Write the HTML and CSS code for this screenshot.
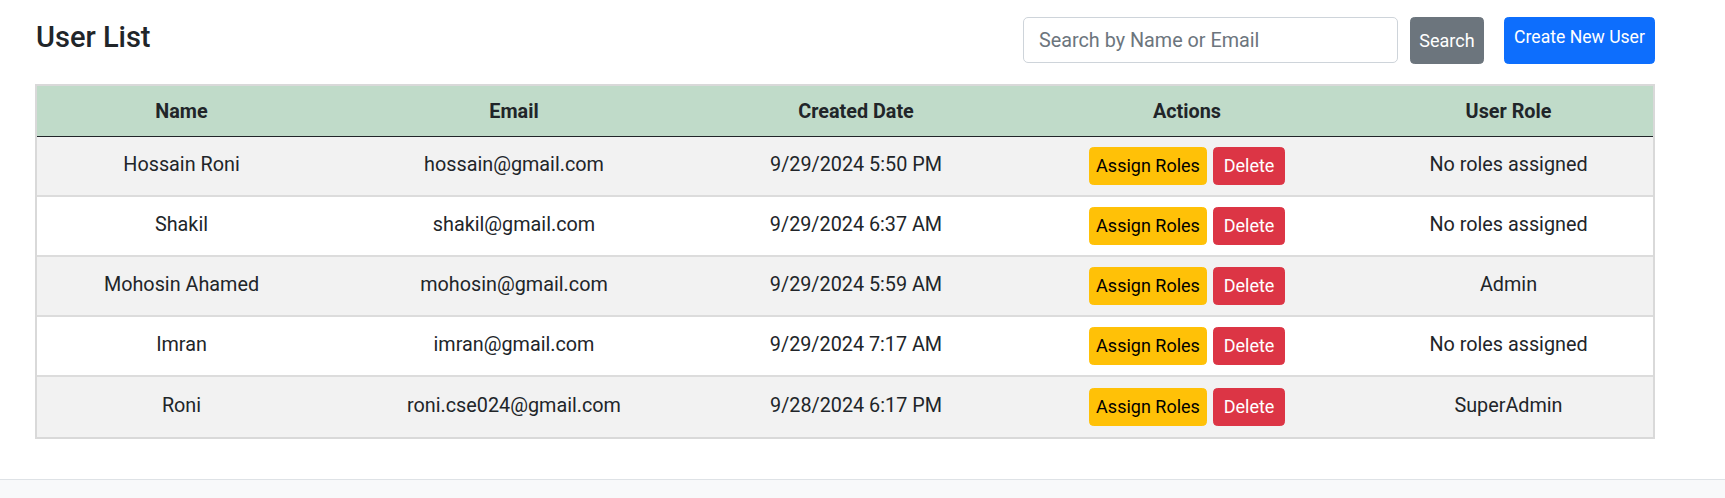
FILE: index.html
```html
<!DOCTYPE html>
<html lang="en">
<head>
<meta charset="utf-8">
<title>User List</title>
<link rel="stylesheet" href="styles.css">
</head>
<body>
<main class="page">
  <div class="topbar">
    <h3 class="title">User List</h3>
    <div class="tools">
      <form class="search">
        <input class="search-input" type="text" placeholder="Search by Name or Email">
        <button type="button" class="btn btn-secondary">Search</button>
      </form>
      <a class="btn btn-primary btn-create">Create New User</a>
    </div>
  </div>
  <div class="table-wrap">
    <table class="users">
      <thead>
        <tr>
          <th class="c-name">Name</th>
          <th class="c-email">Email</th>
          <th class="c-date">Created Date</th>
          <th class="c-actions">Actions</th>
          <th class="c-role">User Role</th>
        </tr>
      </thead>
      <tbody>
        <tr>
          <td>Hossain Roni</td>
          <td>hossain@gmail.com</td>
          <td>9/29/2024 5:50 PM</td>
          <td><div class="actions"><button class="btn btn-warning">Assign Roles</button><button class="btn btn-danger">Delete</button></div></td>
          <td>No roles assigned</td>
        </tr>
        <tr>
          <td>Shakil</td>
          <td>shakil@gmail.com</td>
          <td>9/29/2024 6:37 AM</td>
          <td><div class="actions"><button class="btn btn-warning">Assign Roles</button><button class="btn btn-danger">Delete</button></div></td>
          <td>No roles assigned</td>
        </tr>
        <tr>
          <td>Mohosin Ahamed</td>
          <td>mohosin@gmail.com</td>
          <td>9/29/2024 5:59 AM</td>
          <td><div class="actions"><button class="btn btn-warning">Assign Roles</button><button class="btn btn-danger">Delete</button></div></td>
          <td>Admin</td>
        </tr>
        <tr>
          <td>Imran</td>
          <td>imran@gmail.com</td>
          <td>9/29/2024 7:17 AM</td>
          <td><div class="actions"><button class="btn btn-warning">Assign Roles</button><button class="btn btn-danger">Delete</button></div></td>
          <td>No roles assigned</td>
        </tr>
        <tr>
          <td>Roni</td>
          <td>roni.cse024@gmail.com</td>
          <td>9/28/2024 6:17 PM</td>
          <td><div class="actions"><button class="btn btn-warning">Assign Roles</button><button class="btn btn-danger">Delete</button></div></td>
          <td>SuperAdmin</td>
        </tr>
      </tbody>
    </table>
  </div>
</main>
<footer class="footer"></footer>
</body>
</html>
```
FILE: styles.css
```css
* { box-sizing: border-box; }

html, body {
  margin: 0;
  padding: 0;
  background: #fff;
}

body {
  font-family: Roboto, "Liberation Sans", Arial, sans-serif;
  color: #212529;
  font-size: 19.8px;
  height: 498px;
  overflow: hidden;
}

.page {
  padding: 17px 70px 0 35px;
}

.topbar {
  display: flex;
  justify-content: space-between;
  align-items: flex-start;
  height: 47px;
}

.title {
  margin: 3px 0 0 1px;
  font-size: 29px;
  font-weight: 500;
  line-height: 1.2;
}

.tools {
  display: flex;
  align-items: stretch;
  height: 47px;
  gap: 20px;
}

.search {
  display: flex;
  align-items: stretch;
  gap: 12px;
  margin: 0;
}

.search-input {
  width: 375px;
  height: 46px;
  border: 1px solid #ced4da;
  border-radius: 5px;
  padding: 0 15px;
  font-family: inherit;
  font-size: 19.8px;
  color: #212529;
  background: #fff;
}

.search-input::placeholder {
  color: #6c757d;
}

.btn {
  font-family: inherit;
  font-size: 18px;
  line-height: 26px;
  border: 1px solid transparent;
  border-radius: 4.4px;
  padding: 0;
  cursor: pointer;
  text-decoration: none;
  text-align: center;
}

.btn-secondary {
  background: #6c757d;
  border-color: #6c757d;
  color: #fff;
  width: 74px;
}

.btn-primary {
  background: #0d6efd;
  border-color: #0d6efd;
  color: #fff;
  display: block;
  width: 151px;
  padding-top: 6px;
  font-size: 17.6px;
}

.table-wrap {
  margin-top: 20px;
  border: 2px solid #d9d9d9;
  width: 1620px;
}

.users {
  width: 100%;
  border-collapse: separate;
  border-spacing: 0;
  table-layout: fixed;
  text-align: center;
}

.users th {
  background: #c0dbc9;
  font-weight: 700;
  height: 51px;
  padding: 0 8px;
  border-bottom: 1px solid #212529;
  vertical-align: middle;
}

.c-name { width: 289px; }
.c-email { width: 376px; }
.c-date { width: 308px; }
.c-actions { width: 354px; }
.c-role { width: 289px; }

.users td {
  height: 60px;
  padding: 0 8px 3px;
  vertical-align: middle;
  border-bottom: 2px solid #dcdcdc;
  background: #fff;
}

.users tbody tr:nth-child(odd) td {
  background: #f2f2f2;
}

.users tbody tr:last-child td {
  border-bottom: none;
}

.actions {
  display: flex;
  justify-content: center;
  gap: 6px;
  margin-top: 3px;
}

.actions .btn {
  height: 38px;
}

.btn-warning {
  background: #ffc107;
  border-color: #ffc107;
  color: #000;
  width: 118px;
}

.btn-danger {
  background: #dc3545;
  border-color: #dc3545;
  color: #fff;
  width: 72px;
}

.footer {
  margin-top: 40px;
  border-top: 1px solid #dee2e6;
  background: #f8f9fa;
  height: 40px;
}
```
